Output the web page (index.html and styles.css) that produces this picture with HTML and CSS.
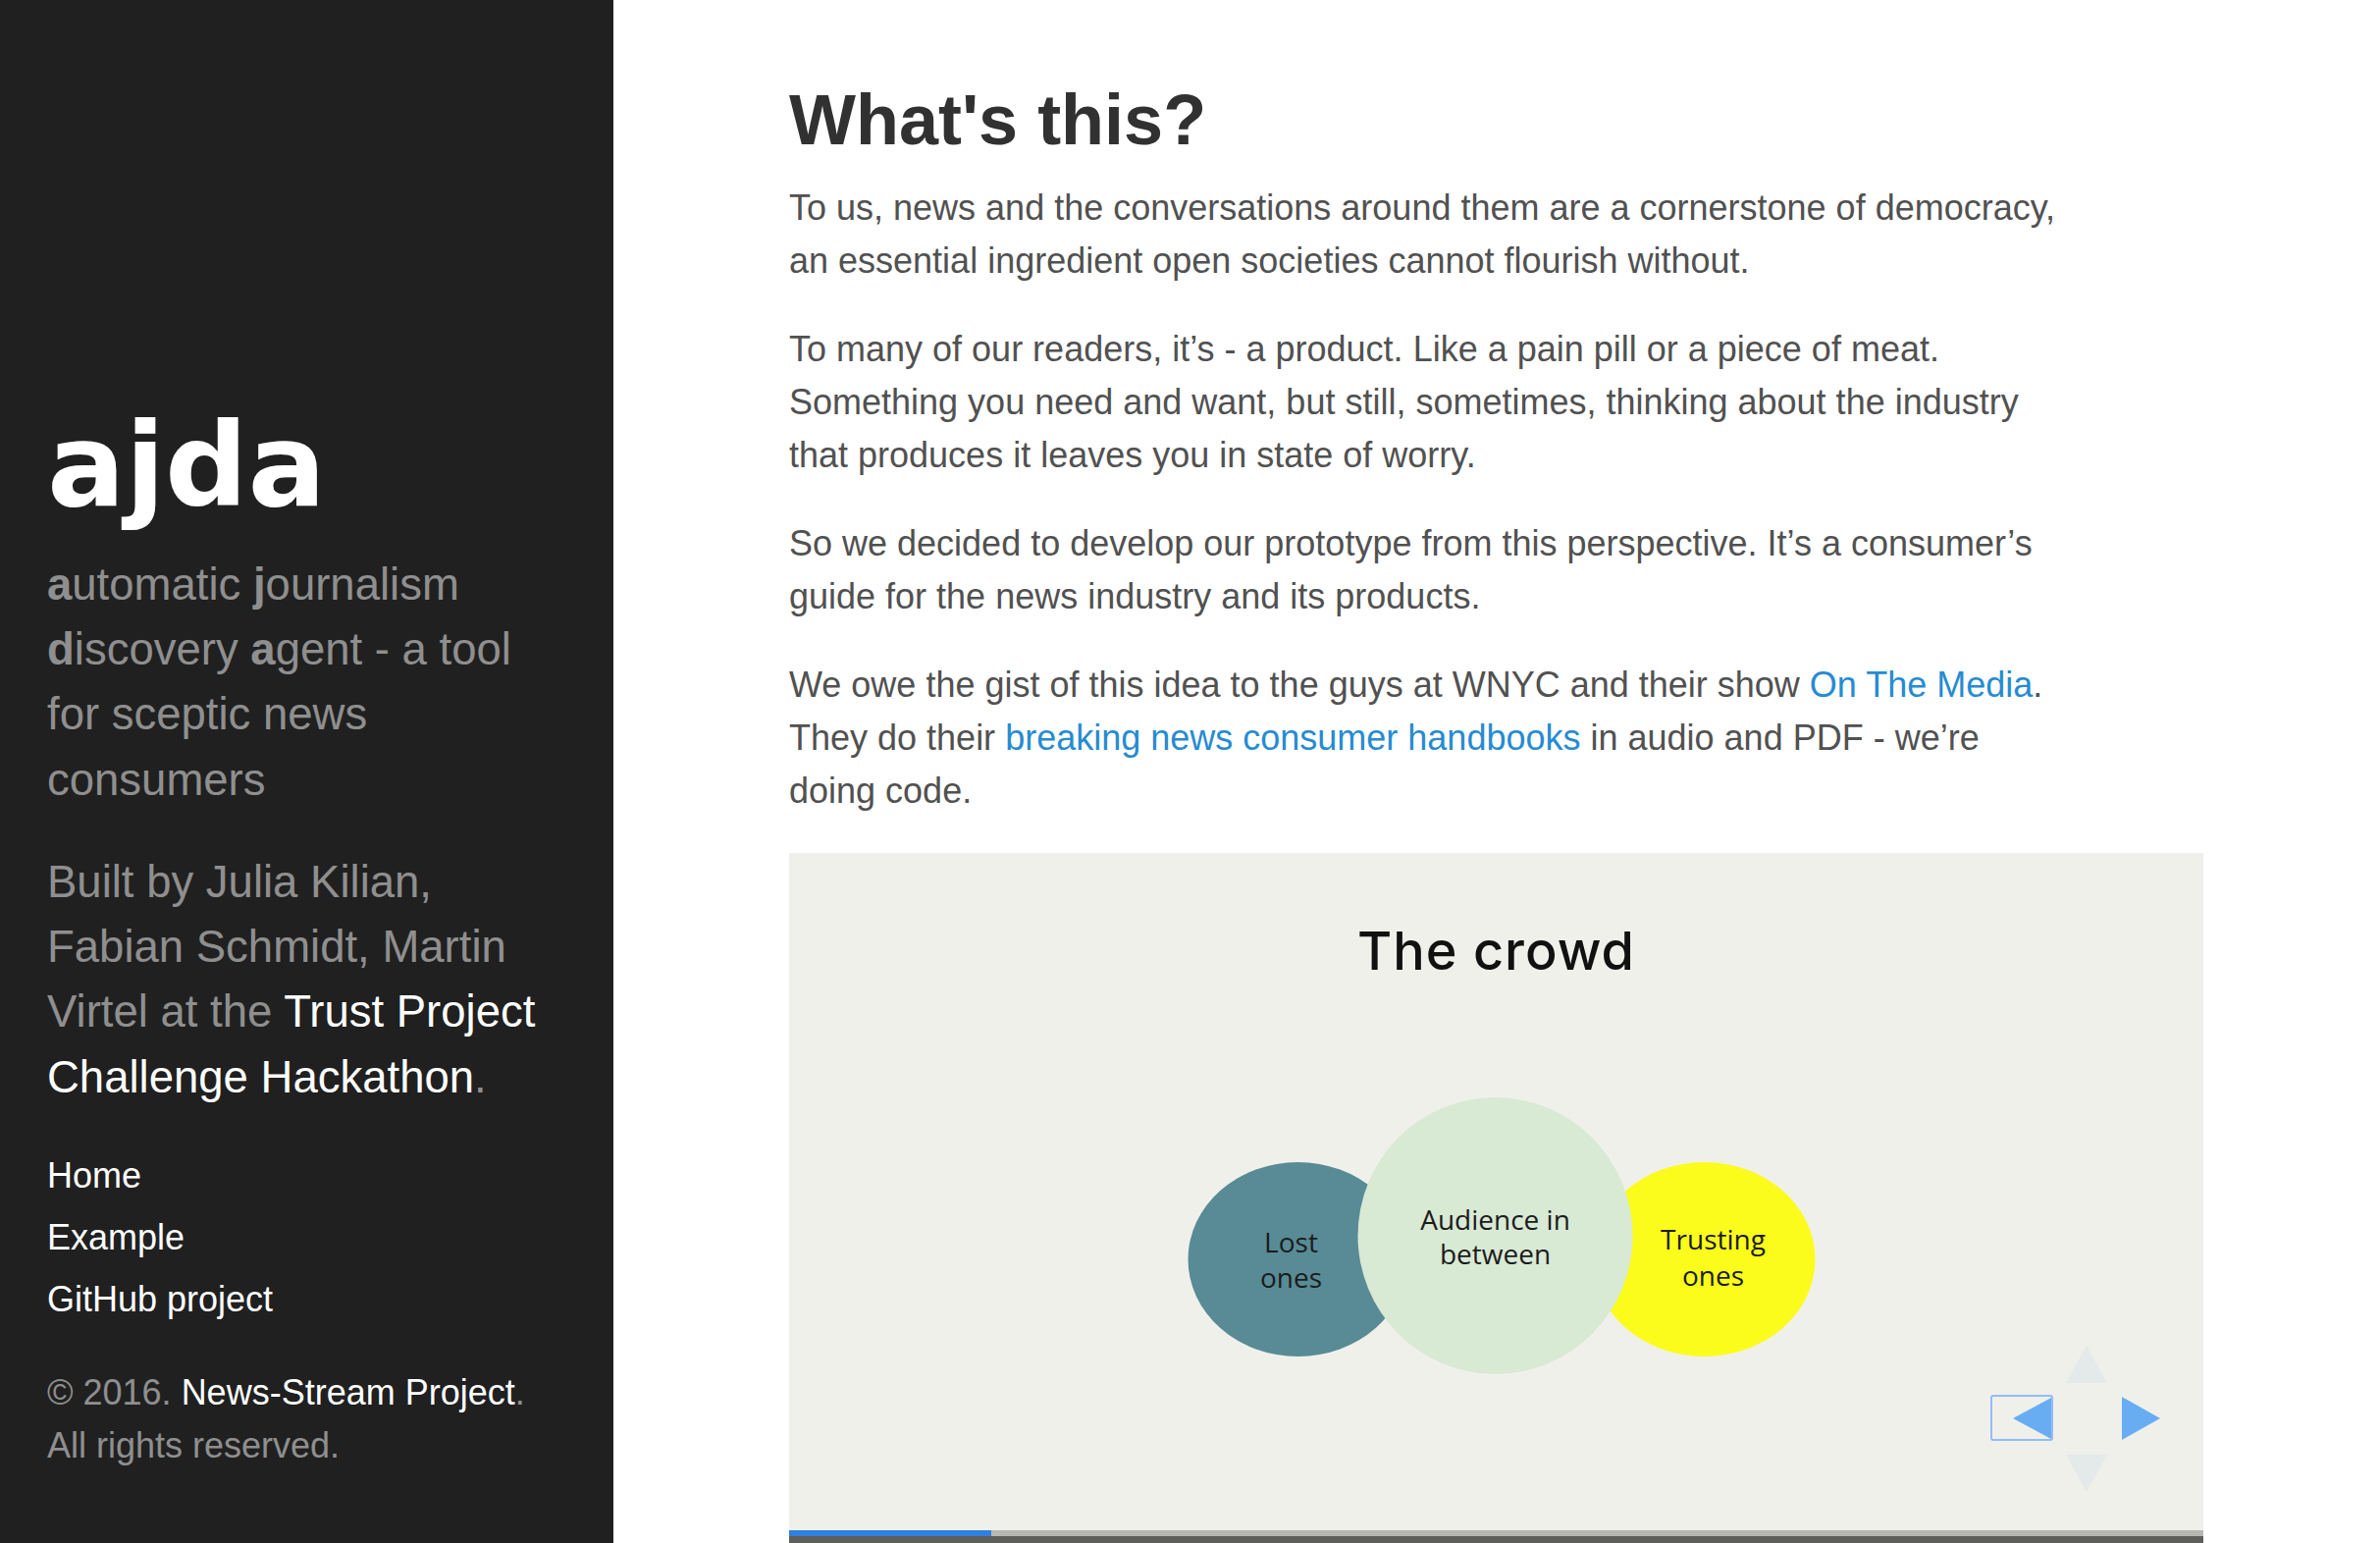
FILE: index.html
```html
<!DOCTYPE html>
<html lang="en">
<head>
<meta charset="utf-8">
<title>ajda</title>
<link rel="stylesheet" href="styles.css">
</head>
<body>
<div class="layout">
  <aside class="sidebar">
    <div class="sidebar-about">
      <h1 class="brand">ajda</h1>
      <p class="lead"><b>a</b>utomatic <b>j</b>ournalism <b>d</b>iscovery <b>a</b>gent - a tool for sceptic news consumers</p>
      <p class="lead">Built by Julia Kilian, Fabian Schmidt, Martin Virtel at the <a href="#">Trust Project Challenge Hackathon</a>.</p>
    </div>
    <nav class="sidebar-nav">
      <a class="sidebar-nav-item" href="#">Home</a>
      <a class="sidebar-nav-item" href="#">Example</a>
      <a class="sidebar-nav-item" href="#">GitHub project</a>
    </nav>
    <p class="copyright">© 2016. <a href="#">News-Stream Project</a>. All rights reserved.</p>
  </aside>

  <main class="content">
    <h1 class="page-title">What's this?</h1>
    <p>To us, news and the conversations around them are a cornerstone of democracy, an essential ingredient open societies cannot flourish without.</p>
    <p>To many of our readers, it’s - a product. Like a pain pill or a piece of meat. Something you need and want, but still, sometimes, thinking about the industry that produces it leaves you in state of worry.</p>
    <p>So we decided to develop our prototype from this perspective. It’s a consumer’s guide for the news industry and its products.</p>
    <p>We owe the gist of this idea to the guys at WNYC and their show <a href="#">On The Media</a>. They do their <a href="#">breaking news consumer handbooks</a> in audio and PDF - we’re doing code.</p>

    <div class="slide-frame">
      <div class="slide-stage">
        <h2 class="slide-title">The crowd</h2>
        <svg class="venn" viewBox="-13.5 0 658 284" width="658" height="284">
          <ellipse cx="113" cy="165" rx="112" ry="99" fill="#588b96"/>
          <ellipse cx="527" cy="165" rx="113" ry="99" fill="#fcfc1c"/>
          <ellipse cx="314" cy="141" rx="140" ry="141" fill="#d8e9d4"/>
          <g class="venn-label">
            <text x="106" y="158">Lost</text>
            <text x="106" y="194">ones</text>
            <text x="314" y="135">Audience in</text>
            <text x="314" y="170">between</text>
            <text x="536" y="155">Trusting</text>
            <text x="536" y="192">ones</text>
          </g>
        </svg>
        <svg class="controls" viewBox="0 0 175 150" width="175" height="150">
          <polygon points="98,0 77,38 119,38" fill="#e4e9ea"/>
          <polygon points="77,111 119,111 98,149" fill="#e4e9ea"/>
          <rect x="1" y="51" width="62" height="45" rx="2" fill="none" stroke="#93bcf6" stroke-width="2"/>
          <polygon points="23,74 62,53 62,95" fill="#68adf2"/>
          <polygon points="134,52 134,96 173,74" fill="#68adf2"/>
        </svg>
      </div>
      <div class="progress"><span class="progress-bar" style="width:14.3%"></span></div>
      <div class="frame-bottom"></div>
    </div>
  </main>
</div>
</body>
</html>
```

FILE: styles.css
```css
html, body {
  margin: 0;
  padding: 0;
}

body {
  font-family: "Liberation Sans", Arial, sans-serif;
  font-size: 36px;
  line-height: 54px;
  color: #515151;
  background: #fff;
}

a {
  text-decoration: none;
}

.layout {
  display: flex;
  align-items: flex-start;
}

/* Sidebar */
.sidebar {
  flex: 0 0 625px;
  width: 625px;
  height: 100vh;
  box-sizing: border-box;
  background: #202020;
  color: rgba(255, 255, 255, 0.5);
  padding: 0 62px 72px 48px;
  display: flex;
  flex-direction: column;
  justify-content: flex-end;
}

.sidebar a {
  color: #fff;
}

.brand {
  margin: 0 0 16px 0;
  font-family: "DejaVu Sans", sans-serif;
  font-weight: bold;
  font-size: 118px;
  line-height: 146px;
  color: #fff;
}

.lead {
  margin: 0 0 38px 0;
  font-size: 45.5px;
  line-height: 66.3px;
}

.lead b {
  font-weight: bold;
}

.sidebar-about .lead:last-child {
  margin-bottom: 35px;
}

.sidebar-nav {
  display: flex;
  flex-direction: column;
  margin-bottom: 37px;
}

.sidebar-nav-item {
  display: block;
  font-size: 36px;
  line-height: 63px;
}

.copyright {
  margin: 0;
  font-size: 36px;
  line-height: 54px;
}

/* Content */
.content {
  flex: 1 1 auto;
  padding: 77px 0 0 179px;
}

.page-title {
  margin: 0 0 18px 0;
  font-size: 72px;
  line-height: 90px;
  font-weight: bold;
  color: #313131;
}

.content p {
  max-width: 1300px;
  margin: 0 0 36px 0;
}

.content p a {
  color: #268bd2;
}

/* Slide */
.slide-frame {
  width: 1441px;
  display: flex;
  flex-direction: column;
}

.slide-stage {
  position: relative;
  height: 690px;
  background: #f0f0eb;
  display: flex;
  flex-direction: column;
  align-items: center;
  padding-top: 73px;
  box-sizing: border-box;
}

.slide-title {
  margin: 0 0 122px 0;
  font-family: Inter, "Noto Sans", sans-serif;
  font-weight: 500;
  font-size: 54px;
  line-height: 54px;
  letter-spacing: 1px;
  color: #111;
}

.venn {
  display: block;
}

.venn-label text {
  font-family: "Open Sans", "Noto Sans", sans-serif;
  font-size: 28px;
  fill: #1c1c1c;
  text-anchor: middle;
}

.controls {
  position: absolute;
  left: 1224px;
  top: 502px;
}

.progress {
  height: 6px;
  background: #b8b8b3;
}

.progress-bar {
  display: block;
  height: 100%;
  background: #2f80e0;
}

.frame-bottom {
  height: 24px;
  background: #5e5e5a;
}
```
